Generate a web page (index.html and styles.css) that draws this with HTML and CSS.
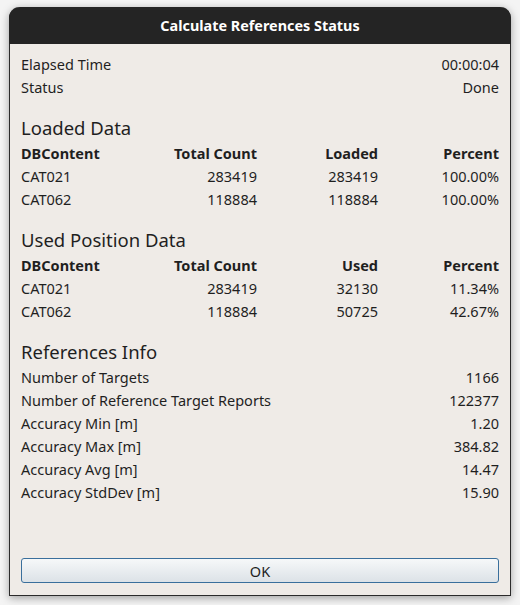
FILE: index.html
```html
<!DOCTYPE html>
<html>
<head>
<meta charset="utf-8">
<link rel="stylesheet" href="styles.css">
</head>
<body>
<div class="window">
  <div class="titlebar">Calculate References Status</div>
  <div class="content">
    <div class="kv"><span>Elapsed Time</span><span>00:00:04</span></div>
    <div class="kv"><span>Status</span><span>Done</span></div>

    <div class="section">Loaded Data</div>
    <div class="table">
      <span class="th l">DBContent</span><span class="th">Total Count</span><span class="th">Loaded</span><span class="th">Percent</span>
      <span class="l">CAT021</span><span>283419</span><span>283419</span><span>100.00%</span>
      <span class="l">CAT062</span><span>118884</span><span>118884</span><span>100.00%</span>
    </div>

    <div class="section">Used Position Data</div>
    <div class="table">
      <span class="th l">DBContent</span><span class="th">Total Count</span><span class="th">Used</span><span class="th">Percent</span>
      <span class="l">CAT021</span><span>283419</span><span>32130</span><span>11.34%</span>
      <span class="l">CAT062</span><span>118884</span><span>50725</span><span>42.67%</span>
    </div>

    <div class="section">References Info</div>
    <div class="kv"><span>Number of Targets</span><span>1166</span></div>
    <div class="kv"><span>Number of Reference Target Reports</span><span>122377</span></div>
    <div class="kv"><span>Accuracy Min [m]</span><span>1.20</span></div>
    <div class="kv"><span>Accuracy Max [m]</span><span>384.82</span></div>
    <div class="kv"><span>Accuracy Avg [m]</span><span>14.47</span></div>
    <div class="kv"><span>Accuracy StdDev [m]</span><span>15.90</span></div>

    <button class="ok">OK</button>
  </div>
</div>
</body>
</html>
```
FILE: styles.css
```css
html, body {
  margin: 0;
  padding: 0;
}
body {
  width: 520px;
  height: 605px;
  background: #f4f4f4;
  font-family: "Noto Sans", "Liberation Sans", sans-serif;
  font-size: 14.5px;
  color: #1f1f1f;
  overflow: hidden;
  padding: 7px 9px 0 9px;
  box-sizing: border-box;
}
.window {
  width: 502px;
  height: 589px;
  display: flex;
  flex-direction: column;
  border-radius: 11px 11px 0 0;
  box-shadow: 0 2px 9px rgba(0,0,0,0.35);
  background: #efebe7;
  box-sizing: border-box;
  border: 1px solid #2b2b2b;
  border-top: none;
}
.titlebar {
  height: 37px;
  flex: none;
  background: #242424;
  border-radius: 11px 11px 0 0;
  color: #ffffff;
  font-weight: bold;
  font-size: 14.4px;
  display: flex;
  align-items: center;
  justify-content: center;
  margin: 0 -1px;
  padding-bottom: 1px;
  box-sizing: border-box;
}
.content {
  flex: 1;
  display: flex;
  flex-direction: column;
  padding: 9px 11px 12px 11px;
}
.kv {
  display: flex;
  justify-content: space-between;
  height: 23px;
  line-height: 23px;
}
.section {
  font-size: 18.5px;
  height: 26px;
  line-height: 28px;
  margin-top: 15px;
  margin-bottom: 2px;
}
.table {
  display: grid;
  grid-template-columns: 1fr 115px 115px 115px;
  column-gap: 6px;
  grid-auto-rows: 23px;
  line-height: 23px;
  text-align: right;
}
.table .l {
  text-align: left;
}
.th {
  font-weight: bold;
}
.ok {
  margin-top: auto;
  height: 25px;
  border: 1px solid #3a6f9c;
  border-radius: 3px;
  background: linear-gradient(#f6f8f9, #dce2e7);
  font-family: inherit;
  font-size: 14.5px;
  color: #1f1f1f;
  padding: 0;
}
```
